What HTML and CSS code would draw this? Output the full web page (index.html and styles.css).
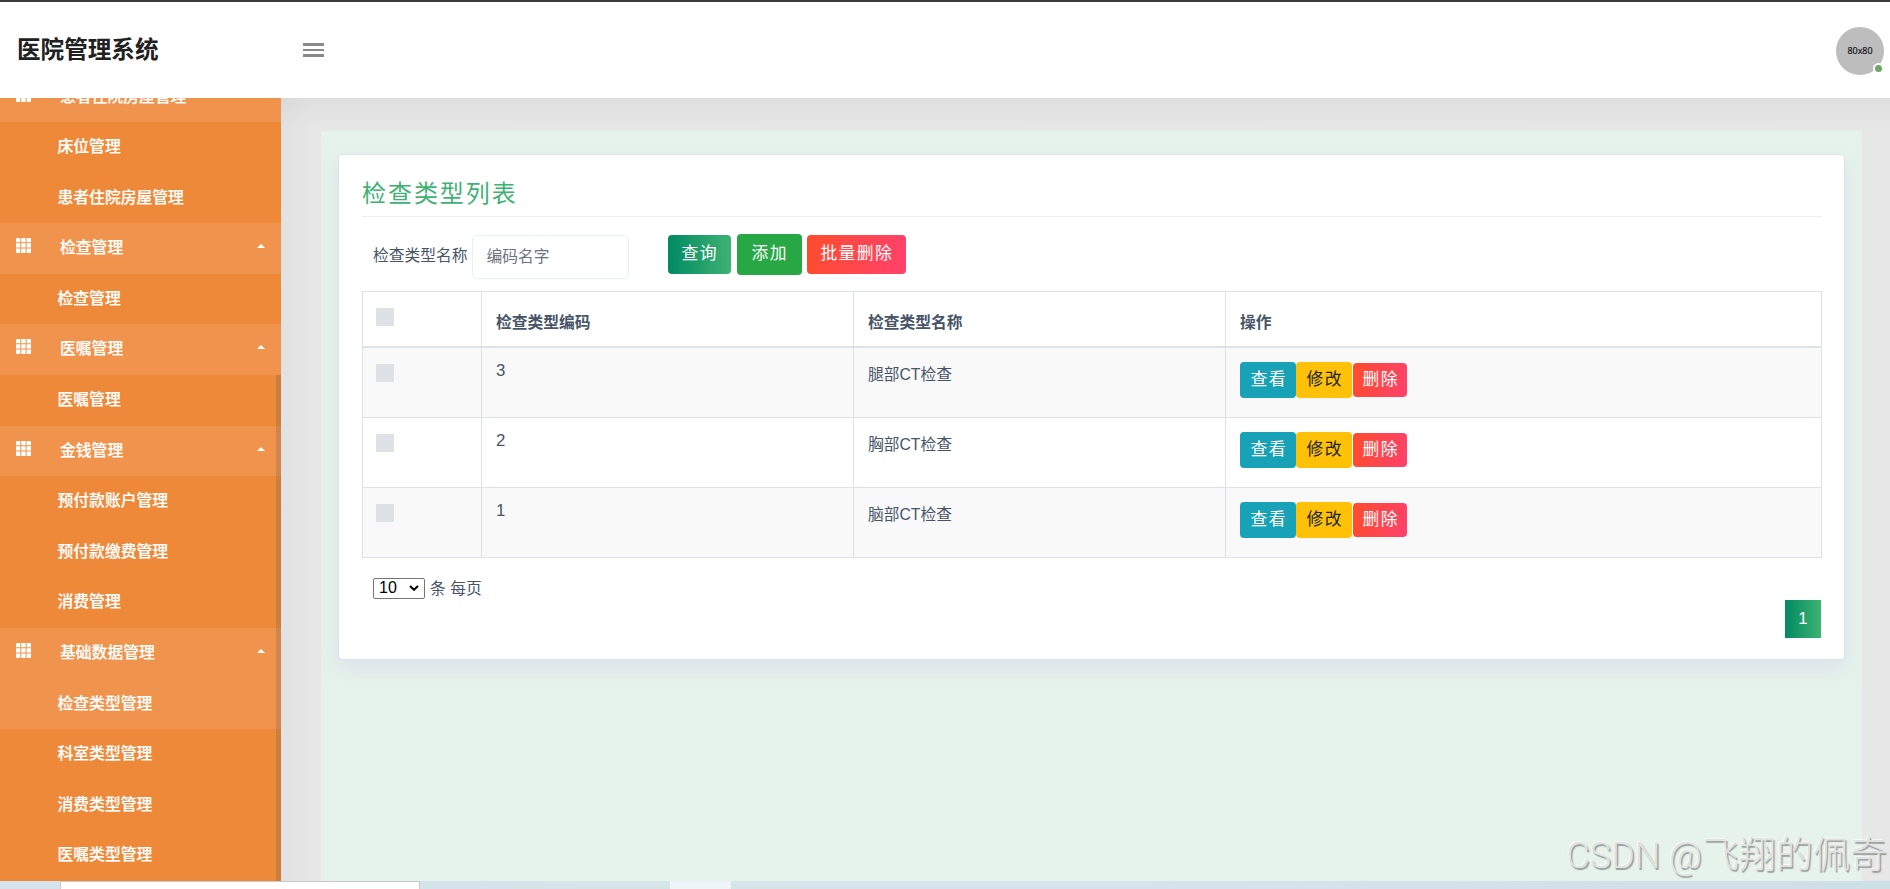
FILE: index.html
```html
<!DOCTYPE html>
<html lang="zh-CN">
<head>
<meta charset="utf-8">
<title>医院管理系统</title>
<link rel="stylesheet" href="styles.css">
</head>
<body>
<svg class="defs" width="0" height="0">
  <symbol id="grid" viewBox="0 0 15 15">
    <path d="M0 1a1 1 0 0 1 1-1h3.3v4.2H0zM5.3 0h4.3v4.2H5.3zM10.6 0H14a1 1 0 0 1 1 1v3.2h-4.4zM0 5.3h4.3v4.1H0zM5.3 5.3h4.3v4.1H5.3zM10.6 5.3H15v4.1h-4.4zM0 10.5h4.3V15H1a1 1 0 0 1-1-1zM5.3 10.5h4.3V15H5.3zM10.6 10.5H15V14a1 1 0 0 1-1 1h-3.4z"/>
  </symbol>
</svg>
<div class="app">
  <header class="topbar">
    <h1 class="brand">医院管理系统</h1>
    <div class="burger"><i></i><i></i><i></i></div>
    <div class="avatar">80x80<span class="status"></span></div>
  </header>
  <div class="body">
    <nav class="sidebar">
      <ul class="menu">
        <li class="group"><svg class="icon"><use href="#grid"/></svg><span>患者住院房屋管理</span></li>
        <li class="item">床位管理</li>
        <li class="item">患者住院房屋管理</li>
        <li class="group"><svg class="icon"><use href="#grid"/></svg><span>检查管理</span><b class="caret"></b></li>
        <li class="item">检查管理</li>
        <li class="group"><svg class="icon"><use href="#grid"/></svg><span>医嘱管理</span><b class="caret"></b></li>
        <li class="item">医嘱管理</li>
        <li class="group"><svg class="icon"><use href="#grid"/></svg><span>金钱管理</span><b class="caret"></b></li>
        <li class="item">预付款账户管理</li>
        <li class="item">预付款缴费管理</li>
        <li class="item">消费管理</li>
        <li class="group"><svg class="icon"><use href="#grid"/></svg><span>基础数据管理</span><b class="caret"></b></li>
        <li class="item active">检查类型管理</li>
        <li class="item">科室类型管理</li>
        <li class="item">消费类型管理</li>
        <li class="item">医嘱类型管理</li>
      </ul>
      <div class="thumb"></div>
    </nav>
    <main class="content">
      <div class="panel">
        <section class="card">
          <h2 class="title">检查类型列表</h2>
          <div class="filters">
            <label class="label">检查类型名称</label>
            <input class="field" type="text" placeholder="编码名字">
            <button class="btn query">查询</button>
            <button class="btn add">添加</button>
            <button class="btn danger">批量删除</button>
          </div>
          <table class="table">
            <colgroup><col class="c1"><col class="c2"><col class="c3"><col></colgroup>
            <thead>
              <tr><th><i class="check"></i></th><th class="head">检查类型编码</th><th class="head">检查类型名称</th><th class="head">操作</th></tr>
            </thead>
            <tbody>
              <tr><td><i class="check"></i></td><td class="code">3</td><td class="name">腿部CT检查</td><td><div class="actions"><button class="btn sm view">查看</button><button class="btn sm edit">修改</button><button class="btn sm danger">删除</button></div></td></tr>
              <tr><td><i class="check"></i></td><td class="code">2</td><td class="name">胸部CT检查</td><td><div class="actions"><button class="btn sm view">查看</button><button class="btn sm edit">修改</button><button class="btn sm danger">删除</button></div></td></tr>
              <tr><td><i class="check"></i></td><td class="code">1</td><td class="name">脑部CT检查</td><td><div class="actions"><button class="btn sm view">查看</button><button class="btn sm edit">修改</button><button class="btn sm danger">删除</button></div></td></tr>
            </tbody>
          </table>
          <div class="pagesize">
            <div class="select">10<svg class="chev" viewBox="0 0 10 6"><path d="M1 1l4 3.8L9 1"/></svg></div>
            <span class="unit">条 每页</span>
          </div>
          <div class="pager"><span class="page">1</span></div>
        </section>
      </div>
    </main>
  </div>
  <footer class="taskbar"><div class="window"></div><div class="tab"></div></footer>
  <div class="watermark"><span class="latin">CSDN @</span>飞翔的佩奇</div>
</div>
</body>
</html>
```
FILE: styles.css
```css
* { box-sizing: border-box; }
body {
  margin: 0;
  font-family: "Liberation Sans", "Noto Sans CJK SC", sans-serif;
  font-size: 15.75px;
  color: #475569;
}
.defs { position: absolute; }
.app {
  position: relative;
  display: flex;
  flex-direction: column;
  width: 1890px;
  height: 889px;
  overflow: hidden;
}

/* Top bar */
.topbar {
  position: relative;
  z-index: 2;
  flex: none;
  display: flex;
  align-items: center;
  height: 98px;
  padding: 0 6px 0 17px;
  border-top: 2px solid #3d3b3c;
  background: #fff;
}
.brand {
  width: 286px;
  margin: 0;
  font-size: 23.6px;
  line-height: 34px;
  font-weight: 700;
  color: #212121;
}
.burger { display: flex; flex-direction: column; gap: 3px; width: 21px; }
.burger i { height: 2.7px; background: #8a8a8a; }
.avatar {
  position: relative;
  width: 48px;
  height: 48px;
  margin: 2px 0 0 auto;
  border-radius: 50%;
  background: #bdbdbd;
  color: #111;
  font: 8.9px/47px "Open Sans", sans-serif;
  text-align: center;
  -webkit-text-stroke: .2px #111;
}
.status {
  position: absolute;
  right: 0;
  bottom: 1px;
  width: 11px;
  height: 11px;
  border: 2px solid #fff;
  border-radius: 50%;
  background: #6aa764;
}

/* Sidebar */
.body { flex: 1; display: flex; min-height: 0; }
.sidebar {
  position: relative;
  z-index: 1;
  flex: none;
  display: flex;
  flex-direction: column;
  justify-content: flex-end;
  width: 281px;
  overflow: hidden;
  background: #ed8939;
}
.menu {
  margin: 0;
  padding: 0;
  list-style: none;
  color: #fff;
  font-size: 15.8px;
  font-weight: 500;
  -webkit-text-stroke: .2px #fff;
}
.group, .item { height: 50.6px; line-height: 50px; }
.group { display: flex; background: #f0934c; padding-left: 16px; }
.item { padding-left: 57.5px; }
.item.active { background: #f0934c; }
.icon { width: 15px; height: 15px; margin: 15px 29px 0 0; fill: #fff; }
.caret {
  width: 0;
  height: 0;
  margin: 21px 16px 0 auto;
  border: 4px solid transparent;
  border-top: 0;
  border-bottom-color: #fff;
}
.thumb {
  position: absolute;
  top: 277px;
  right: 0;
  bottom: 0;
  width: 5px;
  background: rgba(85, 85, 85, .22);
}

/* Content */
.content {
  flex: 1;
  display: flex;
  padding: 33px 28px 0 40px;
  background:
    linear-gradient(rgba(0, 0, 0, .035), transparent 32px),
    linear-gradient(90deg, #e1e1e1, #e7e7e7 32px);
}
.panel { flex: 1; padding: 23px 17px 0; background: #e6f3eb; }
.card {
  height: 506px;
  padding: 19px 22px 0 23px;
  border: 1px solid #dbe3ee;
  border-radius: 4px;
  background: #fff;
  box-shadow: 0 8px 20px rgba(214, 218, 236, .7);
}
.title {
  width: 1460px;
  height: 43px;
  margin: 0;
  border-bottom: 1px solid #eceeef;
  font-size: 24px;
  line-height: 39px;
  font-weight: 400;
  letter-spacing: 1.95px;
  color: #3eb273;
}
.filters { display: flex; align-items: flex-start; height: 74px; padding: 17px 0 0 11px; }
.label { width: 98.5px; margin-top: 2px; line-height: 40px; white-space: nowrap; }
.field {
  width: 157px;
  height: 44px;
  margin: 1px 39px 0 0;
  padding: 0 14px 1px 14px;
  border: 1px solid #e5f3ec;
  border-radius: 5px;
  font: inherit;
}
.field::placeholder { color: #6c757d; opacity: 1; }
.btn {
  height: 39px;
  margin: 1px 0 0;
  padding: 0 0 6px 1.5px;
  border: 0;
  border-radius: 4px;
  color: #fff;
  font-family: inherit;
  font-size: 16.8px;
  letter-spacing: 1.4px;
  text-align: center;
}
.query { width: 63px; background: linear-gradient(90deg, #018a63, #3eb273); }
.add { width: 65px; height: 41px; margin: 0 5px 0 6px; background: #28a745; }
.danger { width: 99px; background: linear-gradient(100deg, #ff4c2c, #ff416c); }

/* Table */
.table { width: 1460px; border-collapse: collapse; table-layout: fixed; }
.c1 { width: 118.5px; }
.c2, .c3 { width: 372px; }
.table th, .table td {
  height: 70px;
  padding: 14px 14px 0 14.5px;
  border: 1px solid #dee2e6;
  text-align: left;
  vertical-align: top;
}
.table th { height: 55px; border-bottom-width: 2px; padding-top: 15px; }
.table tbody tr:first-child td { height: 71px; }
.table tbody tr:nth-child(odd) { background: #f9f9f9; }
.check { display: block; width: 18px; height: 18px; margin: 1px 0 0 -2px; background: #dee2e6; }
td .check { margin-top: 2px; }
.table .head { padding-top: 19px; line-height: 24px; }
.table .code { padding-top: 11px; font-size: 16.8px; line-height: 24px; }
.table .name { padding-top: 15px; line-height: 24px; }
.actions { display: flex; align-items: center; height: 36px; }
.sm { height: 36px; width: 56px; margin: 0; padding-bottom: 4px; }
.view { background: #17a2b8; }
.edit { background: #ffc107; color: #212529; }
.sm.danger { width: 54px; height: 34px; margin-left: 1px; }

/* Footer of the card */
.pagesize { display: flex; align-items: center; gap: 5px; height: 24px; margin: 18px 0 0 11px; }
.unit { padding-bottom: 2px; }
.select {
  display: flex;
  align-items: center;
  justify-content: space-between;
  width: 52px;
  height: 21px;
  padding: 0 5px;
  border: 1px solid #767676;
  border-radius: 2px;
  color: #000;
  font-size: 16px;
}
.chev { width: 10px; height: 6px; fill: none; stroke: #000; stroke-width: 2; }
.pager { display: flex; justify-content: flex-end; padding: 0 1px; }
.page {
  width: 36px;
  height: 38px;
  background: linear-gradient(90deg, #018a63, #3eb273);
  color: #fff;
  font-size: 16.8px;
  line-height: 37px;
  text-align: center;
}

/* Taskbar strip */
.taskbar {
  flex: none;
  display: flex;
  height: 8px;
  padding-left: 60px;
  background: linear-gradient(90deg, #d5e4ec, #d5e5ea 35%, #d6e5ec 60%, #d2e0e7 85%, #cde0e6);
}
.window { width: 360px; border: 1px solid #c6c8ca; border-bottom: 0; background: #fff; }
.tab { width: 61px; margin-left: 250px; background: #eef4f7; }

.watermark {
  position: absolute;
  z-index: 3;
  right: 3px;
  bottom: 6px;
  color: #dfe2e1;
  font: 300 37px/54px "Roboto", "Noto Sans CJK SC", sans-serif;
  text-shadow: 1.5px 1.5px 1px rgba(110, 110, 110, .65), -1px -1px 1px rgba(255, 255, 255, .6);
  white-space: nowrap;
}
.latin { font-size: 36px; }
```
